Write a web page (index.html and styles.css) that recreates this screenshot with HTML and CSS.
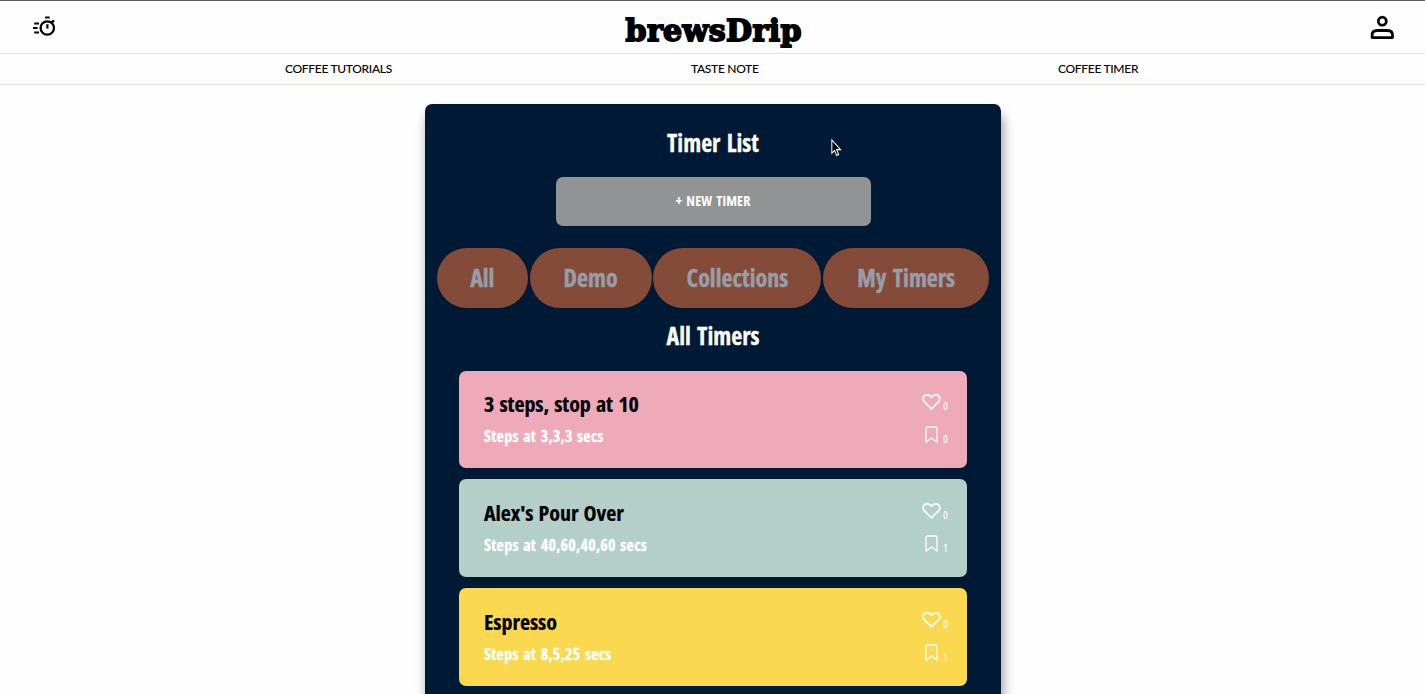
FILE: index.html
```
<!DOCTYPE html>
<html lang="en">
<head>
<meta charset="utf-8">
<title>brewsDrip</title>
<link rel="stylesheet" href="styles.css">
</head>
<body>
<svg class="sprite" width="0" height="0" aria-hidden="true">
  <symbol id="heart" viewBox="0 0 20 18"><path d="M10 16.200 2.600 8.800C.6 6.700.7 3.800 2.600 2.400 4.800.8 8.200 1.200 10 4c1.800-2.800 5.200-3.200 7.400-1.600 1.900 1.400 2 4.300 0 6.400z" fill="none" stroke="currentColor" stroke-width="1.800" stroke-linejoin="round"/></symbol>
  <symbol id="bookmark" viewBox="0 0 13 18"><path d="M1 16.200V2.500Q1 1 2.500 1h8Q12 1 12 2.500v13.700l-5.500-4.200z" fill="none" stroke="currentColor" stroke-width="1.300" stroke-linejoin="round"/></symbol>
</svg>
<header class="topbar">
  <svg class="icon-timer" width="24" height="21" viewBox="0 0 24 21" fill="none" stroke="#000"><circle cx="14.300" cy="12" r="6.700" stroke-width="2.300"/><path d="M12.100 1.500h4.500M14.400 8.300v4.300M1.200 7.500h4.800M0 12h4.500M1.200 16.500h4.800" stroke-width="2.200"/><path d="m18.700 6.600 2.200-2.200" stroke-width="2.400"/></svg>
  <div class="brand"><span class="brand-text">brewsDrip</span></div>
  <svg class="icon-user" width="24" height="24" viewBox="0 0 24 24" fill="none" stroke="#000" stroke-width="2.800"><circle cx="12.300" cy="6.200" r="4"/><path d="M2.100 22.600v-2.400q0-4.700 5-4.700h10.400q5 0 5 4.700v2.400z" stroke-linejoin="round"/></svg>
</header>
<nav class="nav">
  <a class="nav-tutorials">COFFEE TUTORIALS</a>
  <a class="nav-note">TASTE NOTE</a>
  <a class="nav-timer">COFFEE TIMER</a>
</nav>
<main class="panel">
  <h1 class="heading">Timer List</h1>
  <button class="new-timer">+ NEW TIMER</button>
  <div class="tabs">
    <button class="tab">All</button>
    <button class="tab">Demo</button>
    <button class="tab">Collections</button>
    <button class="tab">My Timers</button>
  </div>
  <h2 class="heading heading-list">All Timers</h2>
  <section class="timers">
    <article class="timer pink">
      <div class="info"><h3>3 steps, stop at 10</h3><p>Steps at 3,3,3 secs</p></div>
      <div class="stats">
        <div class="stat"><svg class="heart"><use href="#heart"/></svg><span>0</span></div>
        <div class="stat"><svg class="bookmark"><use href="#bookmark"/></svg><span>0</span></div>
      </div>
    </article>
    <article class="timer green">
      <div class="info"><h3>Alex's Pour Over</h3><p>Steps at 40,60,40,60 secs</p></div>
      <div class="stats">
        <div class="stat"><svg class="heart"><use href="#heart"/></svg><span>0</span></div>
        <div class="stat"><svg class="bookmark"><use href="#bookmark"/></svg><span>1</span></div>
      </div>
    </article>
    <article class="timer yellow">
      <div class="info"><h3>Espresso</h3><p>Steps at 8,5,25 secs</p></div>
      <div class="stats">
        <div class="stat"><svg class="heart"><use href="#heart"/></svg><span>0</span></div>
        <div class="stat"><svg class="bookmark"><use href="#bookmark"/></svg><span>1</span></div>
      </div>
    </article>
  </section>
</main>
<svg class="cursor" width="11" height="18" viewBox="0 0 13 19" preserveAspectRatio="none"><path d="M1 1v14l3.300-3 2.300 5.300 2.400-1-2.300-5.100h4.600z" fill="#000" stroke="#fff" stroke-width="1.200"/></svg>
</body>
</html>
```
FILE: styles.css
```
* { box-sizing: border-box; }
body {
  margin: 0;
  height: 694px;
  overflow: hidden;
  background: #fefefe;
  font-family: "Open Sans", sans-serif;
  font-stretch: 75%;
}
h1, h2, h3, p { margin: 0; }
button { border: 0; font-family: inherit; font-stretch: inherit; padding: 0; }
.sprite { position: absolute; }
.topbar {
  display: flex;
  justify-content: space-between;
  align-items: flex-start;
  height: 54px;
  padding: 0 31px 0 33px;
  border-top: 1px solid #5c5a5b;
  border-bottom: 1px solid #e8ddd3;
}
.icon-timer { margin-top: 15px; }
.icon-user { margin-top: 14px; }
.brand {
  width: 176px;
  padding-top: 11px;
  font: bold 30px/37px "DejaVu Serif", serif;
  color: #000;
}
.brand-text { display: inline-block; white-space: nowrap; letter-spacing: .4px; -webkit-text-stroke: 1.800px #000; }
.nav {
  display: flex;
  gap: 299px;
  height: 31px;
  padding-left: 285px;
  border-bottom: 1px solid #e8ddd3;
  font: 500 12px/30px Lato, sans-serif;
  letter-spacing: -.3px;
  color: #000;
  white-space: nowrap;
}
.nav-tutorials { width: 107px; }
.nav-note { width: 68px; }
.nav-timer { width: 80px; }
.panel {
  display: flex;
  flex-direction: column;
  align-items: center;
  width: 576px;
  height: 620px;
  margin: 19px 0 0 425px;
  padding-top: 22px;
  border-radius: 7px;
  background: #001a36;
  box-shadow: 2px 10px 12px rgba(0, 0, 0, .4);
}
.heading { color: #fff; font-size: 24px; line-height: 34px; font-weight: 700; white-space: nowrap; word-spacing: 2px; -webkit-text-stroke: .3px; }
.new-timer {
  width: 315px;
  height: 49px;
  margin-top: 17px;
  padding-bottom: 2px;
  border-radius: 7px;
  background: #929394;
  color: #fff;
  font-size: 14px;
  font-weight: 700;
  word-spacing: 1.500px;
  letter-spacing: .1px;
}
.tabs { display: grid; grid-template-columns: 91px 122px 168px 166px; column-gap: 1.800px; margin-top: 22px; }
.tab { height: 60px; padding-bottom: 1px; border-radius: 30px; background: #844b39; color: #969eaa; font-size: 24px; font-weight: 700; word-spacing: 2px; -webkit-text-stroke: .4px; }
.heading-list { margin-top: 11px; }
.timers { display: flex; flex-direction: column; gap: 11px; width: 508px; margin-top: 18px; }
.timer { display: flex; justify-content: space-between; height: 98px; padding: 17px 19px 0 25px; border-radius: 7px; flex: none; }
.pink { height: 97px; padding-top: 16px; background: #eeaab9; }
.green { background: #b4cec8; }
.yellow { background: #fad84f; }
.info h3 { font-size: 22px; line-height: 33px; font-weight: 700; color: #000; word-spacing: 1.300px; letter-spacing: -.08px; -webkit-text-stroke: .2px; }
.info p { font-size: 16px; line-height: 32px; font-weight: 700; color: #fff; word-spacing: 1.300px; letter-spacing: .27px; -webkit-text-stroke: .3px; }
.stats { width: 26px; padding-top: 6px; color: #fff; }
.stat { display: flex; height: 33px; justify-content: space-between; }
.stat span { font-size: 11.500px; line-height: 16px; font-weight: 400; padding-top: 5px; }
.heart { width: 19px; height: 18px; flex: none; }
.bookmark { width: 13px; height: 18px; margin-left: 3px; flex: none; }
.cursor { position: absolute; left: 831px; top: 139px; }
```
